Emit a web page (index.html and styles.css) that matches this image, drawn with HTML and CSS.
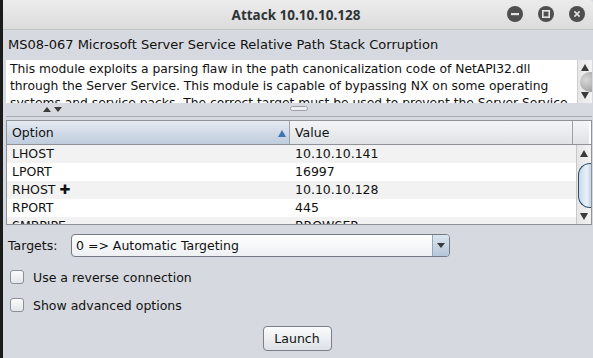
FILE: index.html
```html
<!DOCTYPE html>
<html>
<head>
<meta charset="utf-8">
<link rel="stylesheet" href="styles.css">
</head>
<body>
<div class="win">
  <div class="titlebar">
    <span class="title">Attack 10.10.10.128</span>
    <div class="wbtns">
      <span class="wbtn"><svg width="16" height="16" viewBox="0 0 16 16"><circle cx="8" cy="8" r="8" fill="#4f4f4f"/><rect x="4" y="7" width="8" height="2.2" fill="#e4e4e4"/></svg></span>
      <span class="wbtn"><svg width="16" height="16" viewBox="0 0 16 16"><circle cx="8" cy="8" r="8" fill="#4f4f4f"/><rect x="4.8" y="4.8" width="6.4" height="6.4" fill="none" stroke="#e4e4e4" stroke-width="1.6"/></svg></span>
      <span class="wbtn"><svg width="16" height="16" viewBox="0 0 16 16"><circle cx="8" cy="8" r="8" fill="#4f4f4f"/><path d="M5.4 5.4 L10.6 10.6 M10.6 5.4 L5.4 10.6" stroke="#e4e4e4" stroke-width="1.6"/></svg></span>
    </div>
  </div>
  <div class="content">
    <div class="modname">MS08-067 Microsoft Server Service Relative Path Stack Corruption</div>
    <div class="desc">
      <div class="desc-text"><span class="line">This module exploits a parsing flaw in the path canonicalization code of NetAPI32.dll</span><span class="line">through the Server Service. This module is capable of bypassing NX on some operating</span><span class="line">systems and service packs. The correct target must be used to prevent the Server Service</span></div>
      <div class="vscroll">
        <span class="arr up"></span>
        <span class="thumb grey"></span>
        <span class="arr down"></span>
      </div>
    </div>
    <div class="splitter">
      <span class="tri up"></span><span class="tri down"></span>
      <span class="grip"></span>
    </div>
    <div class="table">
      <div class="thead">
        <div class="th sorted">Option<span class="sortarrow"></span></div>
        <div class="th">Value</div>
        <div class="th corner"></div>
      </div>
      <div class="tbody">
        <div class="rows">
          <div class="tr odd"><span class="c1">LHOST</span><span class="c2">10.10.10.141</span></div>
          <div class="tr"><span class="c1">LPORT</span><span class="c2">16997</span></div>
          <div class="tr odd"><span class="c1">RHOST <b class="plus">✚</b></span><span class="c2">10.10.10.128</span></div>
          <div class="tr"><span class="c1">RPORT</span><span class="c2">445</span></div>
          <div class="tr odd"><span class="c1">SMBPIPE</span><span class="c2">BROWSER</span></div>
        </div>
        <div class="vscroll tscroll">
          <span class="arr up"></span>
          <span class="thumb blue"></span>
          <span class="arr down"></span>
        </div>
      </div>
    </div>
    <div class="targets">
      <span class="tlabel">Targets:</span>
      <div class="combo"><span class="combo-text">0 =&gt; Automatic Targeting</span><span class="combo-btn"><span class="tri down"></span></span></div>
    </div>
    <label class="check"><span class="box"></span>Use a reverse connection</label>
    <label class="check"><span class="box"></span>Show advanced options</label>
    <div class="launch-row"><button class="btn">Launch</button></div>
  </div>
</div>
</body>
</html>
```

FILE: styles.css
```css
* { box-sizing: border-box; }
html, body { margin: 0; padding: 0; }
body {
  width: 593px;
  height: 358px;
  overflow: hidden;
  background: #1b1b1b;
  font-family: "DejaVu Sans", sans-serif;
  font-size: 12px;
  color: #111;
}
.win {
  margin-left: 3px;
  width: 590px;
  height: 358px;
  background: #d6d9df;
  display: flex;
  flex-direction: column;
}
.titlebar {
  height: 30px;
  background: linear-gradient(#ececec, #dcdcdc);
  border-bottom: 1px solid #c4c4c4;
  position: relative;
  display: flex;
  align-items: center;
  justify-content: center;
  border-top-right-radius: 4px;
}
.title {
  font-family: "Noto Sans", sans-serif;
  font-weight: bold;
  font-size: 13.5px;
  color: #2e3436;
  margin-left: -4px;
}
.wbtns {
  position: absolute;
  right: 8px;
  top: 6px;
  display: flex;
  gap: 15px;
}
.wbtn { display: block; width: 16px; height: 16px; }
.wbtn svg { display: block; }
.content {
  flex: 1;
  display: flex;
  flex-direction: column;
  padding: 0 1px 0 3px;
}
.modname {
  height: 30px;
  line-height: 30px;
  padding-left: 2px;
  font-size: 13px;
  white-space: nowrap;
}
.desc {
  height: 43px;
  background: #fff;
  display: flex;
  overflow: hidden;
}
.desc-text {
  flex: 1;
  padding: 1px 0 0 4px;
  font-size: 12.3px;
  line-height: 17px;
  overflow: hidden;
  white-space: nowrap;
  display: flex;
  flex-direction: column;
}
.line { display: block; }
.vscroll {
  width: 15px;
  background: linear-gradient(90deg, #e6e6e6, #f2f2f2);
  border-left: 1px solid #cfcfcf;
  display: flex;
  flex-direction: column;
  align-items: center;
  justify-content: space-between;
  padding: 4px 0 4px;
}
.arr {
  width: 0; height: 0;
  border-left: 4px solid transparent;
  border-right: 4px solid transparent;
}
.arr.up { border-bottom: 7px solid #3a3a3a; }
.arr.down { border-top: 7px solid #3a3a3a; }
.thumb.grey {
  width: 15px;
  height: 20px;
  margin-left: 4px;
  border-radius: 10px 0 0 10px;
  background: radial-gradient(circle at 40% 40%, #d8d8d8, #9a9a9a);
}
.splitter {
  height: 14px;
  border-bottom: 1px solid #a9acb1;
  position: relative;
  display: flex;
  align-items: center;
  padding-left: 37px;
  gap: 3px;
}
.tri {
  display: inline-block;
  width: 0; height: 0;
  border-left: 4px solid transparent;
  border-right: 4px solid transparent;
}
.tri.up { border-bottom: 5px solid #3a3a3a; }
.tri.down { border-top: 5px solid #3a3a3a; }
.grip {
  position: absolute;
  left: 284px;
  top: 3px;
  width: 18px;
  height: 5px;
  border: 1px solid #9da0a5;
  border-radius: 3px;
  background: #eceef1;
}
.table {
  margin-top: 3px;
  height: 105px;
  border: 1px solid #8f9398;
  background: #fff;
  display: flex;
  flex-direction: column;
  overflow: hidden;
}
.thead {
  height: 24px;
  display: flex;
  border-bottom: 1px solid #8f9398;
}
.th {
  width: 283px;
  padding-left: 5px;
  line-height: 23px;
  font-size: 12.5px;
  background: linear-gradient(#f4f5f6, #dfe2e6);
  border-right: 1px solid #9ea2a7;
  position: relative;
}
.th.sorted { background: linear-gradient(#e4eaf2, #bfccdc); }
.th.corner { width: 16px; border-right: none; padding: 0; }
.sortarrow {
  position: absolute;
  right: 3px;
  top: 9px;
  width: 0; height: 0;
  border-left: 4px solid transparent;
  border-right: 4px solid transparent;
  border-bottom: 7px solid #3d77b3;
}
.tbody { flex: 1; display: flex; overflow: hidden; }
.rows { flex: 1; overflow: hidden; }
.tr {
  height: 18px;
  display: flex;
  line-height: 18px;
  font-size: 12.5px;
}
.tr.odd { background: #f2f2f2; }
.c1 { width: 283px; padding-left: 5px; }
.c2 { padding-left: 5px; }
.plus { font-size: 13px; font-weight: bold; }
.tscroll { padding: 5px 0 4px; border-left: 1px solid #c8c8c8; }
.thumb.blue {
  width: 14px;
  height: 45px;
  margin-left: 2px;
  border: 1px solid #2f4c6c;
  border-right: none;
  border-radius: 12px 0 0 12px;
  background: linear-gradient(90deg, #c6d8ea, #eaf2fa 60%, #b9cde2);
}
.targets {
  margin-top: 9px;
  display: flex;
  align-items: center;
  height: 23px;
  padding-left: 2px;
}
.tlabel { width: 63px; font-size: 12.5px; }
.combo {
  width: 379px;
  height: 23px;
  border: 1px solid #737a85;
  border-radius: 4px;
  background: linear-gradient(#ffffff, #eef0f3);
  display: flex;
  overflow: hidden;
}
.combo-text { flex: 1; padding-left: 4px; line-height: 21px; font-size: 12.5px; }
.combo-btn {
  width: 17px;
  border-left: 1px solid #9aa4b2;
  background: linear-gradient(#dbe5f1, #b5c6da);
  display: flex;
  align-items: center;
  justify-content: center;
}
.check {
  display: flex;
  align-items: center;
  height: 14px;
  margin-top: 13px;
  padding-left: 4px;
  font-size: 12.5px;
}
.check + .check { margin-top: 14px; }
.box {
  width: 14px;
  height: 14px;
  border: 1px solid #8b9199;
  border-radius: 3px;
  background: linear-gradient(#fbfbfc, #e3e6ea);
  margin-right: 9px;
}
.launch-row {
  display: flex;
  justify-content: center;
  margin-top: 14px;
  padding-right: 4px;
}
.btn {
  width: 69px;
  height: 25px;
  border: 1px solid #7a8089;
  border-radius: 4px;
  background: linear-gradient(#fbfbfc, #dde1e6);
  font-family: "DejaVu Sans", sans-serif;
  font-size: 12.5px;
  color: #111;
  padding: 0;
}
```
